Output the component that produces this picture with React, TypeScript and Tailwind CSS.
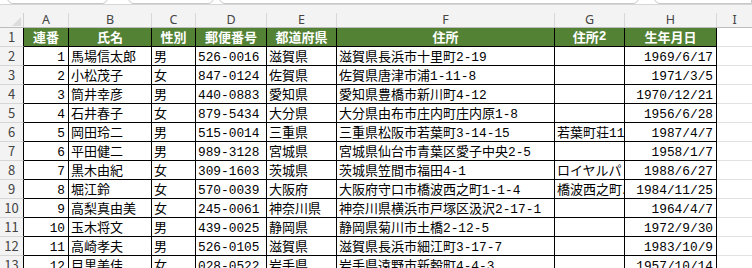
import React from "react";

type Row = [string, string, string, string, string, string, string, string];

const rows: Row[] = [
  ["1", "馬場信太郎", "男", "526-0016", "滋賀県", "滋賀県長浜市十里町2-19", "", "1969/6/17"],
  ["2", "小松茂子", "女", "847-0124", "佐賀県", "佐賀県唐津市浦1-11-8", "", "1971/3/5"],
  ["3", "筒井幸彦", "男", "440-0883", "愛知県", "愛知県豊橋市新川町4-12", "", "1970/12/21"],
  ["4", "石井春子", "女", "879-5434", "大分県", "大分県由布市庄内町庄内原1-8", "", "1956/6/28"],
  ["5", "岡田玲二", "男", "515-0014", "三重県", "三重県松阪市若葉町3-14-15", "若葉町荘111号", "1987/4/7"],
  ["6", "平田健二", "男", "989-3128", "宮城県", "宮城県仙台市青葉区愛子中央2-5", "", "1958/1/7"],
  ["7", "黒木由紀", "女", "309-1603", "茨城県", "茨城県笠間市福田4-1", "ロイヤルパレス笠間", "1988/6/27"],
  ["8", "堀江鈴", "女", "570-0039", "大阪府", "大阪府守口市橋波西之町1-1-4", "橋波西之町ハイツ", "1984/11/25"],
  ["9", "高梨真由美", "女", "245-0061", "神奈川県", "神奈川県横浜市戸塚区汲沢2-17-1", "", "1964/4/7"],
  ["10", "玉木将文", "男", "439-0025", "静岡県", "静岡県菊川市土橋2-12-5", "", "1972/9/30"],
  ["11", "高崎孝夫", "男", "526-0105", "滋賀県", "滋賀県長浜市細江町3-17-7", "", "1983/10/9"],
  ["12", "目黒美佳", "女", "028-0522", "岩手県", "岩手県遠野市新穀町4-4-3", "", "1957/10/14"],
];

const widths = ["w-[45px]", "w-[83px]", "w-[44px]", "w-[71px]", "w-[70px]", "w-[218px]", "w-[70px]", "w-[92px]"];
const letters = ["A", "B", "C", "D", "E", "F", "G", "H"];
const heads = ["連番", "氏名", "性別", "郵便番号", "都道府県", "住所", "住所2", "生年月日"];

const font = { fontFamily: '"Noto Sans CJK JP", "Noto Sans", sans-serif' };

function Txt({ s }: { s: string }) {
  const parts = s.split(/([\x00-\x7F]+)/).filter((p) => p.length > 0);
  return (
    <>
      {parts.map((p, i) =>
        /^[\x00-\x7F]+$/.test(p) ? (
          <span key={i} className="font-mono text-[12.8px]">
            {p}
          </span>
        ) : (
          <span key={i}>{p}</span>
        )
      )}
    </>
  );
}

export default function App() {
  return (
    <div className="w-[752px] h-[268px] overflow-hidden bg-[#f3f3f3] text-black" style={font}>
      <div className="h-[5px] bg-white border-b border-[#d6d6d6] flex overflow-hidden">
        <div className="ml-[7px] w-[101px] h-[12px] -mt-[8px] rounded-b-[6px] border border-[#c8c8c8] bg-white" />
        <div className="ml-[20px] w-[86px] h-[12px] -mt-[8px] rounded-b-[6px] border border-[#c8c8c8] bg-white" />
        <div className="ml-[5px] w-[420px] h-[12px] -mt-[8px] rounded-b-[6px] border border-[#c8c8c8] bg-white" />
        <div className="ml-[15px] flex-1 h-[12px] -mt-[8px] rounded-bl-[6px] border border-[#c8c8c8] bg-white" />
      </div>
      <div className="h-[23px] flex flex-col border-b border-[#bdbdbd]">
        <div className="h-[8px]" />
        <div className="flex h-[14px] text-[12.5px] leading-[14px] text-[#444]" style={{ fontFamily: '"Noto Sans", sans-serif' }}>
          <div className="w-[24px] border-r border-[#d0d0d0] relative">
            <div className="absolute right-[2px] bottom-[1px] w-0 h-0 border-l-[9px] border-l-transparent border-b-[9px] border-b-[#dcdcdc]" />
          </div>
          {letters.map((l, i) => (
            <div key={l} className={`${widths[i]} border-r border-[#d8d8d8] flex items-end justify-center`}>
              {l}
            </div>
          ))}
          <div className="flex-1 flex items-end justify-center">I</div>
        </div>
      </div>
      <div className="flex h-[19px]">
        <div className="w-[24px] border-r border-b border-r-black border-b-[#d6d6d6] flex items-center justify-center text-[13px] leading-[18px] text-[#444]">1</div>
        {heads.map((h, i) => (
          <div
            key={h}
            className={`${widths[i]} bg-[#548235] border-r border-b border-black text-white font-bold text-[13px] leading-[18px] flex items-center justify-center whitespace-nowrap`}
          >
            <Txt s={h} />
          </div>
        ))}
        <div className="flex-1 bg-white border-b border-[#e1e1e1]" />
      </div>
      {rows.map((r, ri) => (
        <div key={ri} className="flex h-[19px]">
          <div className="w-[24px] border-r border-b border-r-black border-b-[#d6d6d6] flex items-center justify-center text-[13px] leading-[18px] text-[#444]">
            {ri + 2}
          </div>
          {r.map((c, ci) => (
            <div
              key={ci}
              className={`${widths[ci]} bg-white border-r border-b border-black text-[13px] leading-[18px] whitespace-nowrap overflow-hidden ${
                ci === 0 || ci === 7 ? "text-right pr-[3px]" : "pl-[2px]"
              }`}
            >
              <Txt s={c} />
            </div>
          ))}
          <div className="flex-1 bg-white border-b border-[#e1e1e1]" />
        </div>
      ))}
    </div>
  );
}
